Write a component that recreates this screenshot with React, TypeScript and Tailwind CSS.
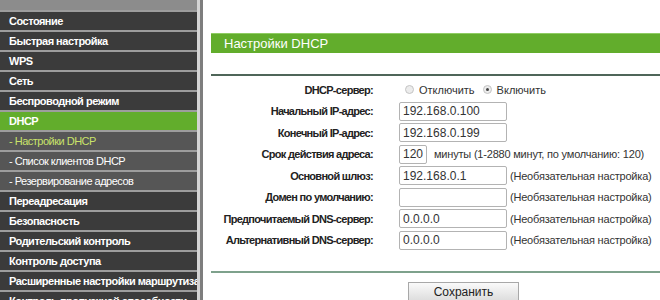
import React from 'react'

type MenuItem = { label: string; kind?: 'main' | 'active' | 'sub' | 'subActive' }

const menu: MenuItem[] = [
  { label: 'Состояние' },
  { label: 'Быстрая настройка' },
  { label: 'WPS' },
  { label: 'Сеть' },
  { label: 'Беспроводной режим' },
  { label: 'DHCP', kind: 'active' },
  { label: '- Настройки DHCP', kind: 'subActive' },
  { label: '- Список клиентов DHCP', kind: 'sub' },
  { label: '- Резервирование адресов', kind: 'sub' },
  { label: 'Переадресация' },
  { label: 'Безопасность' },
  { label: 'Родительский контроль' },
  { label: 'Контроль доступа' },
  { label: 'Расширенные настройки маршрутизации' },
  { label: 'Контроль пропускной способности' },
]

function SideRow({ item }: { item: MenuItem }) {
  const k = item.kind ?? 'main'
  const bg =
    k === 'active' ? 'bg-[#62ad2c]' : k === 'sub' || k === 'subActive' ? 'bg-[#565656]' : 'bg-[#3b3b3b]'
  const color = k === 'subActive' ? 'text-[#c9e36a]' : 'text-white'
  const weight = k === 'sub' || k === 'subActive' ? 'font-normal' : 'font-bold'
  return (
    <div className={`h-[20px] shrink-0 border-t-2 border-[#9d9d9d] ${bg} flex items-center pl-[9px] overflow-hidden`}>
      <span className={`text-[11px] tracking-[-0.5px] whitespace-nowrap ${color} ${weight}`}>{item.label}</span>
    </div>
  )
}

function Sidebar() {
  return (
    <div className="w-[203px] shrink-0 flex h-[300px]">
      <div className="w-[197px] flex flex-col bg-[#3b3b3b] overflow-hidden">
        <div className="h-[10px] shrink-0 bg-[#8c8c8c]" />
        {menu.map((m) => (
          <SideRow key={m.label} item={m} />
        ))}
      </div>
      <div className="w-[3px] bg-[#d4d4d4]" />
      <div className="w-[3px] bg-[#7e7e7e]" />
    </div>
  )
}

function Field({ label, children }: { label: string; children: React.ReactNode }) {
  return (
    <div className="flex items-center h-[21.5px]">
      <div className="w-[162px] text-right text-[11px] font-bold tracking-[-0.7px] text-[#222] whitespace-nowrap">{label}</div>
      <div className="pl-[26px] flex items-center">{children}</div>
    </div>
  )
}

function Input({ value, w = 'w-[108px]' }: { value: string; w?: string }) {
  return (
    <div className={`${w} h-[19px] border border-[#b3b3b3] rounded-[2px] bg-white flex items-center pl-[3px] text-[12px] text-[#333]`}>
      {value}
    </div>
  )
}

function Hint({ children }: { children: React.ReactNode }) {
  return <span className="ml-[3px] text-[11px] tracking-[-0.2px] text-[#333] whitespace-nowrap">{children}</span>
}

function Radio({ checked }: { checked?: boolean }) {
  return (
    <span className="w-[9px] h-[9px] rounded-full border border-[#c4c4c4] bg-[#ececec] flex items-center justify-center">
      {checked && <span className="w-[3px] h-[3px] rounded-full bg-[#444]" />}
    </span>
  )
}

export default function App() {
  return (
    <div className="w-[660px] h-[300px] overflow-hidden flex bg-white" style={{ fontFamily: '"Liberation Sans", Arial, sans-serif' }}>
      <Sidebar />
      <div className="flex-1 min-w-0 pl-[8px] pt-[33px]">
        <div className="h-[20px] bg-[#62ad2c] border-t border-[#8fcc63] flex items-center pl-[13px] text-white text-[13px]">
          Настройки DHCP
        </div>
        <div className="mt-[21px] border-t-2 border-[#4f6659]" />
        <div className="pt-[3px]">
          <Field label="DHCP-сервер:">
            <div className="flex items-center text-[11px] text-[#333] ml-[6px]">
              <Radio />
              <span className="ml-[5px]">Отключить</span>
              <span className="ml-[8px]"><Radio checked /></span>
              <span className="ml-[5px]">Включить</span>
            </div>
          </Field>
          <Field label="Начальный IP-адрес:">
            <Input value="192.168.0.100" />
          </Field>
          <Field label="Конечный IP-адрес:">
            <Input value="192.168.0.199" />
          </Field>
          <Field label="Срок действия адреса:">
            <Input value="120" w="w-[28px]" />
            <Hint>
              <span className="ml-[4px]">минуты (1-2880 минут, по умолчанию: 120)</span>
            </Hint>
          </Field>
          <Field label="Основной шлюз:">
            <Input value="192.168.0.1" />
            <Hint>(Необязательная настройка)</Hint>
          </Field>
          <Field label="Домен по умолчанию:">
            <Input value="" />
            <Hint>(Необязательная настройка)</Hint>
          </Field>
          <Field label="Предпочитаемый DNS-сервер:">
            <Input value="0.0.0.0" />
            <Hint>(Необязательная настройка)</Hint>
          </Field>
          <Field label="Альтернативный DNS-сервер:">
            <Input value="0.0.0.0" />
            <Hint>(Необязательная настройка)</Hint>
          </Field>
        </div>
        <div className="mt-[20px] border-t-2 border-[#7ea18c]" />
        <div className="pt-[6px] pl-[197px]">
          <button className="w-[111px] h-[19px] border border-[#a8a8a8] bg-gradient-to-b from-[#fafafa] to-[#dedede] text-[12px] text-[#222]">
            Сохранить
          </button>
        </div>
      </div>
    </div>
  )
}
